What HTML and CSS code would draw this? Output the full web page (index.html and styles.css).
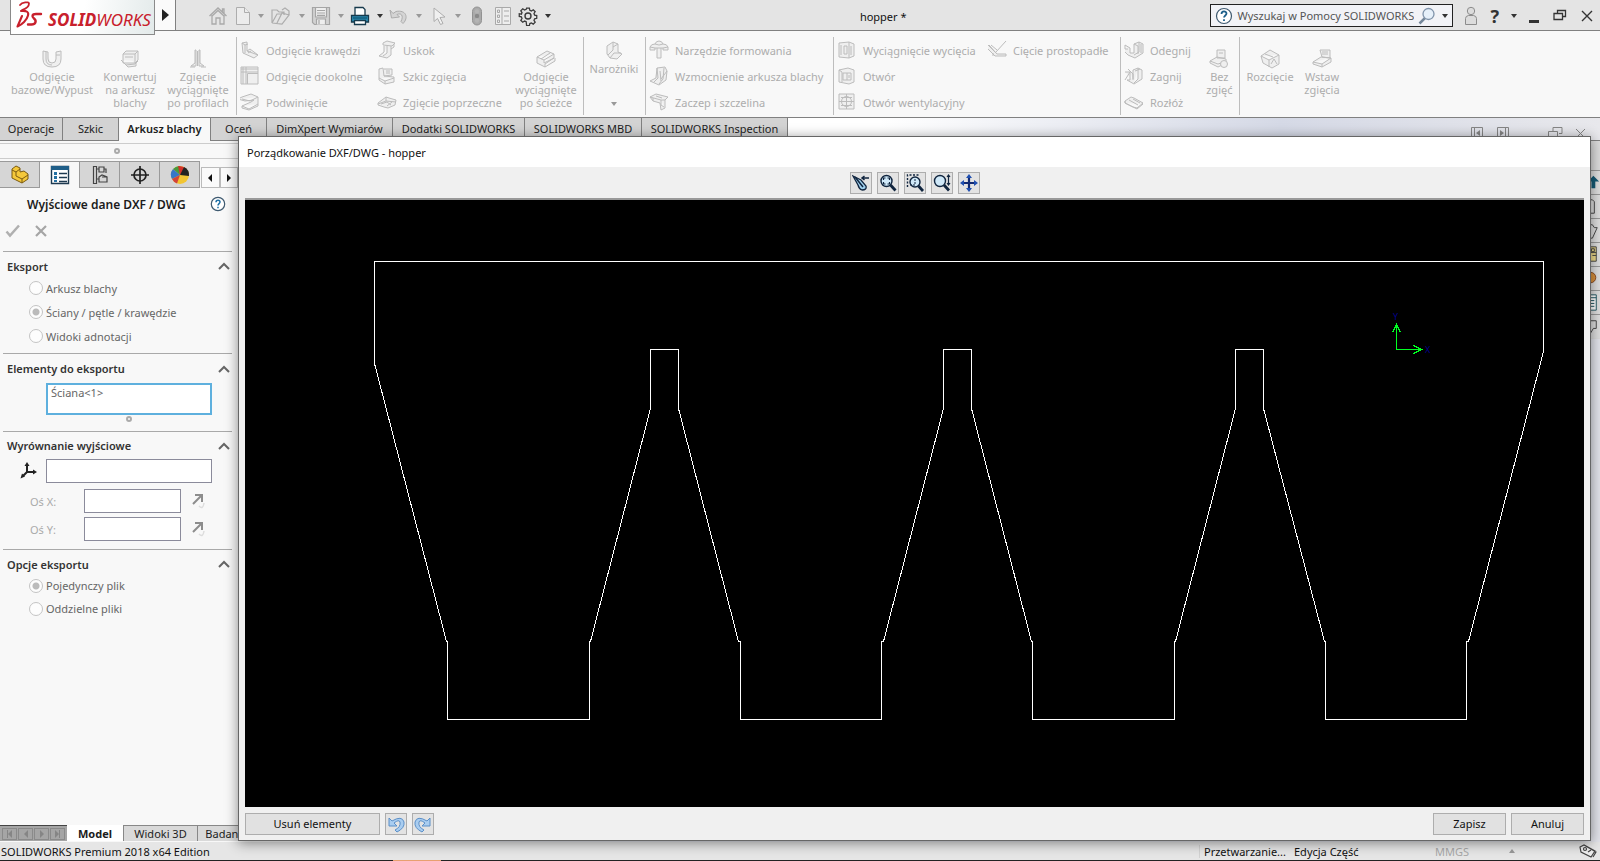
FILE: index.html
```
<!DOCTYPE html>
<html lang="pl">
<head>
<meta charset="utf-8">
<title>SOLIDWORKS – hopper</title>
<link rel="stylesheet" href="styles.css">
</head>
<body>
<div class="app">
  <header class="titlebar">
    <div class="logo">
      <svg class="logo-mark" width="27" height="30" viewBox="0 0 27 30" fill="none" stroke="#c8202c" stroke-linecap="round" stroke-linejoin="round">
        <path d="M4 4c2-3 9-3.500 9-1.500 0 3-4 5.500-7 6.500" stroke-width="1.800"/>
        <path d="M5 10c6-.500 8 1 7 4.500C11 19 6 23.500 1.500 25.500L6 15" stroke-width="2.100"/>
        <path d="M25 13h-5c-4 0-4.500 2.500-2 4.500 3 2.500 1.500 6-2.500 6h-3.500" stroke-width="2.400"/>
      </svg>
      <span class="logo-text"><b>SOLID</b>WORKS</span>
    </div>
    <button class="logo-arrow" aria-label="Menu"><svg width="7" height="12" viewBox="0 0 7 12"><path d="M0 0l7 6-7 6z" fill="#222"/></svg></button>
    <nav class="qat">
      <button class="q-home" aria-label="Start"><svg width="20" height="20" viewBox="0 0 20 20" fill="none" stroke="#a9a9a9" stroke-width="1.300"><path d="M1.500 10L10 2l8.500 8M4 9v9h4v-6h4v6h4V9M14.500 6V3h1.500v4.500M3.500 10.500L10 4.500l6.500 6"/></svg></button>
      <button class="q-new" aria-label="Nowy"><svg width="16" height="20" viewBox="0 0 16 20" fill="#ececec" stroke="#adadad"><path d="M1.500 1.500h8l5 5v12h-13z"/><path d="M9.500 1.500v5h5"/></svg></button>
      <i class="caret off"></i>
      <button class="q-open" aria-label="Otwórz"><svg width="22" height="20" viewBox="0 0 22 20" fill="none" stroke="#adadad" stroke-width="1.200"><path d="M2 17V4h5l2 2h5v3M2 17L7 8h5M2 17l10 1 7-9-7-2-5 10M12 4l3-2 4 3v4"/></svg></button>
      <i class="caret off"></i>
      <button class="q-save" aria-label="Zapisz plik"><svg width="20" height="20" viewBox="0 0 20 20" fill="none" stroke="#a5a5a5" stroke-width="1.200"><path d="M1.500 1.500h17v17H3.500l-2-2z" fill="#d2d2d2"/><path d="M4.500 2v9h11V2M6 4.500h8M6 7h8M6 9.300h8M5.500 18.500V13h9v5.500M8 14v4" fill="#eee"/></svg></button>
      <i class="caret off"></i>
      <button class="q-print" aria-label="Drukuj"><svg width="20" height="20" viewBox="0 0 20 20" stroke="#173a4c" stroke-width="1.300"><path d="M5 10V1.500h8l2 2V10" fill="#fff"/><path d="M1.500 9.500h17v6.500h-17z" fill="#2d8db4"/><path d="M4.500 14.500h11v4h-11z" fill="#fff"/><path d="M3 12h14" stroke="#0f5673"/></svg></button>
      <i class="caret"></i>
      <button class="q-undo" aria-label="Cofnij"><svg width="20" height="20" viewBox="0 0 20 20" fill="#d4d4d4" stroke="#acacac"><path d="M1 4l1.500 8 8-1-2.500-2.500c4-2 7 1 4 7l2 2c6-6 3-14-7-12L4 7.500z"/></svg></button>
      <i class="caret off"></i>
      <button class="q-cursor" aria-label="Wybierz"><svg width="16" height="20" viewBox="0 0 16 20" fill="#f0f0f0" stroke="#adadad"><path d="M2 2l11 9-5 .5 3 6-2.500 1-3-6L2 15.500z"/></svg></button>
      <i class="caret off"></i>
      <button class="q-light" aria-label="Przebuduj"><svg width="12" height="20" viewBox="0 0 12 20"><rect x="1.500" y="1" width="9" height="18" rx="4.500" fill="#aaa" stroke="#929292"/><circle cx="6" cy="5.500" r="2.200" fill="#b4b4b4"/><circle cx="6" cy="10" r="2.200" fill="#8a8a8a"/><circle cx="6" cy="14.500" r="2.200" fill="#b4b4b4"/></svg></button>
      <button class="q-list" aria-label="Właściwości pliku"><svg width="18" height="20" viewBox="0 0 18 20" fill="#eee" stroke="#a9a9a9"><path d="M1.500 1.500h15v17h-15zM8 1.500v17M3.500 4h2v2.500h-2zM3.500 9h2v2.500h-2zM3.500 14h2v2.500h-2zM10 5h5M10 10h5M10 15h5"/></svg></button>
      <button class="q-gear" aria-label="Opcje"><svg width="20" height="20" viewBox="0 0 20 20" fill="none" stroke="#3a3a3a" stroke-width="1.400"><path d="M8.500 1.500h3l.5 2.300 1.700.7 2-1.300 2.100 2.100-1.300 2 .7 1.700 2.300.5v3l-2.300.5-.7 1.700 1.300 2-2.100 2.100-2-1.300-1.700.7-.5 2.300h-3L8 16.200l-1.700-.7-2 1.300-2.100-2.100 1.300-2-.7-1.700-2.300-.5v-3L2.800 8l.7-1.700-1.300-2 2.100-2.100 2 1.300L8 2.800z" transform="translate(.8 .8) scale(.92)"/><circle cx="10" cy="10" r="3"/></svg></button>
      <i class="caret"></i>
    </nav>
    <div class="doc-name">hopper *</div>
    <div class="title-right">
      <div class="search">
        <svg width="18" height="18" viewBox="0 0 18 18"><circle cx="9" cy="9" r="7.500" fill="#fff" stroke="#3f5a70" stroke-width="1.200"/><path d="M6.500 7c0-3.400 5-3.200 5-.4 0 1.800-2.500 1.900-2.500 4M9 12.200v1.800" fill="none" stroke="#1d5f8a" stroke-width="1.800"/></svg>
        <input type="text" aria-label="Szukaj" placeholder="Wyszukaj w Pomocy SOLIDWORKS">
        <svg width="18" height="18" viewBox="0 0 18 18"><path d="M7 11L1.500 16.500" stroke="#75879a" stroke-width="2.500"/><circle cx="10.500" cy="7" r="5.500" fill="#e6f0fa" stroke="#8094ab" stroke-width="1.300"/></svg>
        <i class="caret"></i>
      </div>
      <button class="w-user" aria-label="Użytkownik"><svg width="14" height="20" viewBox="0 0 14 20" fill="#dcdcdc" stroke="#8c8c8c"><path d="M1.500 18.500v-6q0-2.500 3-3h5q3 .5 3 3v6z"/><circle cx="7" cy="5" r="3.700"/></svg></button>
      <button class="w-help" aria-label="Pomoc">?</button>
      <i class="caret"></i>
      <button class="w-min" aria-label="Minimalizuj"><svg width="12" height="16" viewBox="0 0 12 16"><path d="M1 12h10v3H1z" fill="#333"/></svg></button>
      <button class="w-res" aria-label="Przywróć"><svg width="14" height="14" viewBox="0 0 14 14" fill="none" stroke="#333" stroke-width="1.300"><path d="M4.500 4V1.500h8v6H10M1 4.500h8.500v6H1z"/></svg></button>
      <button class="w-close" aria-label="Zamknij"><svg width="12" height="12" viewBox="0 0 12 12" stroke="#333" stroke-width="1.400"><path d="M1 1l10 10M11 1L1 11"/></svg></button>
    </div>
  </header>

  <section class="ribbon">
    <div class="group g1">
      <button class="big"><svg width="20" height="20" viewBox="0 0 20 20"><path d="M1 2v8q0 8 9 8t9-8V2l-5 1v7q0 4-4 4t-4-4V3L1 2M4 3v7q0 6 6 6M14 6h4"/></svg>Odgięcie<br>bazowe/Wypust</button>
      <button class="big"><svg width="20" height="20" viewBox="0 0 20 20"><path d="M3 5l3-3h12v9l-3 3H3zM3 5h12v9M15 5l3-3M1 11l5 5 9-1 3-3M5 8h8M6 16l2 2 8-1v-4"/></svg>Konwertuj<br>na arkusz<br>blachy</button>
      <button class="big"><svg width="20" height="20" viewBox="0 0 20 20"><path d="M7 1v13l-4 3h5V1M12 1v13l4 3h-5V1M9.500 2v15M2 18h5M13 18h5M7 1h1M11 1h1"/></svg>Zgięcie<br>wyciągnięte<br>po profilach</button>
    </div>
    <div class="group g2">
      <div class="stack">
        <button><svg width="20" height="20" viewBox="0 0 20 20"><path d="M2 3l5-1v9l11 4-4 3-11-5zM2 3l3 2v8M5 5l3-1M7 11l3-2 8 6M8 13l3-2"/></svg>Odgięcie krawędzi</button>
        <button><svg width="20" height="20" viewBox="0 0 20 20"><path d="M1 1h17v17H1zM1 6h17M6 1v17M7.500 7.500H18M7.500 7.500V18M3 1v17M1 3h17"/></svg>Odgięcie dookolne</button>
        <button><svg width="20" height="20" viewBox="0 0 20 20"><path d="M2 5l9-3 7 3v7l-9 5-7-3 9-4 3-2-9 1-7-2zM2 7l8 2 8-4M2 14v2l7 2 9-4v-2"/></svg>Podwinięcie</button>
      </div>
      <div class="stack">
        <button><svg width="20" height="20" viewBox="0 0 20 20"><path d="M6 3l4-2 8 2-3 3-9-1zM7 6v6l-5 4 8 2 4-3V6M10 6v7l-4 3M17 4v3l-3 2"/></svg>Uskok</button>
        <button><svg width="20" height="20" viewBox="0 0 20 20"><path d="M2 3l4-1 1 8 10 1v5l-9 2-6-4zM7 3h8v6l-8 1M9 5h4M9 7h4M2 12l6 3 9-3M8 15v3"/></svg>Szkic zgięcia</button>
        <button><svg width="20" height="20" viewBox="0 0 20 20"><path d="M1 11l8-6 3 1 7 2-1 5-7 3-4-1-6-2zM9 5v4l-8 3M9 9l10 1M4 12l6-2 4 3M10 14l5-4"/></svg>Zgięcie poprzeczne</button>
      </div>
      <button class="big"><svg width="20" height="20" viewBox="0 0 20 20"><path d="M1 8l10-6 7 3v4L9 15v3l-8-4zM1 8l7 3 10-6M8 11v3l10-5M9 18l10-6V9M5 10l9-6"/></svg>Odgięcie<br>wyciągnięte<br>po ścieżce</button>
    </div>
    <div class="group g3">
      <button class="big"><svg width="20" height="20" viewBox="0 0 20 20"><path d="M3 5l6-4 5 2v8l4 2-5 5-7-1-3-4zM9 1v8l-5 5M14 3L9 6M6 17l4-5h7"/></svg>Narożniki<i class="caret off"></i></button>
    </div>
    <div class="group g4">
      <div class="stack">
        <button><svg width="20" height="20" viewBox="0 0 20 20"><path d="M1 7q1-3 5-3 1-3 4-3t4 3q4 0 5 3l-5 1H6zM1 7v3h5V8M14 8v2h5V7M8 8v10h4V8M6 4q4 2 8 0"/></svg>Narzędzie formowania</button>
        <button><svg width="20" height="20" viewBox="0 0 20 20"><path d="M8 2l8-1 2 4-1 9-7 5-9-4 6-3zM8 2l1 10-4 4M11 5l1 10M15 2l-1 11-4 5M18 5l-6 8"/></svg>Wzmocnienie arkusza blachy</button>
        <button><svg width="20" height="20" viewBox="0 0 20 20"><path d="M1 5l6-3 12 3-3 3v8l-4 2-1-7-7-2-3-4zM1 5l11 3h4M4 9V6M12 8v5l3 2M7 4l6 2"/></svg>Zaczep i szczelina</button>
      </div>
    </div>
    <div class="group g5">
      <div class="stack">
        <button><svg width="20" height="20" viewBox="0 0 20 20"><path d="M2 3l10-1 5 2v12l-5 2-10-1zM12 2v16M4 5v10M7 6h3v8H7zM14 6v9"/></svg>Wyciągnięcie wycięcia</button>
        <button><svg width="20" height="20" viewBox="0 0 20 20"><path d="M2 4l9-2 6 2v12l-5 2-10-2zM6 7h8v7H6zM2 4l3 2v10M10 7v7M12 9v3"/></svg>Otwór</button>
        <button><svg width="20" height="20" viewBox="0 0 20 20"><path d="M2 2h15v15H2zM9.500 2v15M2 9.500h15M4 5.500h11M4 13.500h11"/><circle cx="9.500" cy="9.500" r="5" fill="none"/></svg>Otwór wentylacyjny</button>
      </div>
      <div class="stack">
        <button><svg width="20" height="20" viewBox="0 0 20 20"><path d="M1 5l8 8M1 9l7 7h11v-2h-9l-8-9M19 1L9 12M4 5l6 5M6 13v3"/></svg>Cięcie prostopadłe</button>
      </div>
    </div>
    <div class="group g6">
      <div class="stack">
        <button><svg width="20" height="20" viewBox="0 0 20 20"><path d="M1 5l5 3v5h4V4l5-2 4 2v9l-8 5-7-3-3-3M15 2v10l-5 3M10 4l4 2v8M1 5v4h3M17 4v9"/></svg>Odegnij</button>
        <button><svg width="20" height="20" viewBox="0 0 20 20"><path d="M1 6h5v8H3l7 4 8-5V4l-4-2-5 2v10M4 3l5 5v5M14 2v11l-4 4M6 6l-5 8M11 5l5-2"/></svg>Zagnij</button>
        <button><svg width="20" height="20" viewBox="0 0 20 20"><path d="M1 9l6-4 3 1 9 5-6 5-4-1-8-4zM1 9v2M5 8l9 5M9 7l7 4M1 11l8 4 4 2 6-5"/></svg>Rozłóż</button>
      </div>
      <button class="big"><svg width="20" height="20" viewBox="0 0 20 20"><path d="M8 1h8v8H8zM1 12l7-4 9 2v4l-8 4-8-4zM1 12l8 3 3-1M10 4h4"/><circle cx="15" cy="15" r="3.500"/></svg>Bez<br>zgięć</button>
    </div>
    <div class="group g7">
      <button class="big"><svg width="20" height="20" viewBox="0 0 20 20"><path d="M1 7l9-6 9 5v9l-7 4-9-5zM1 7l8 4 10-5M9 11v7M11 15l3-5 3 5M5 5l8 3"/></svg>Rozcięcie</button>
      <button class="big"><svg width="20" height="20" viewBox="0 0 20 20"><path d="M8 1h10v8l-8-1zM1 13l8-5 10 1v4l-9 5-9-3zM1 13l9 2 9-6M10 3h6M10 5h6M10 15v3"/></svg>Wstaw<br>zgięcia</button>
    </div>
  </section>

  <nav class="tabs">
    <button class="t1">Operacje</button><button class="t2">Szkic</button><button class="t3 active">Arkusz blachy</button><button class="t4">Oceń</button><button class="t5">DimXpert Wymiarów</button><button class="t6">Dodatki SOLIDWORKS</button><button class="t7">SOLIDWORKS MBD</button><button class="t8">SOLIDWORKS Inspection</button>
    <div class="doc-controls">
      <svg width="120" height="14" viewBox="0 0 120 14" fill="none" stroke="#858585"><path d="M2.500 1.500h11v12h-11zM28.500 1.500h11v12h-11zM5.500 1.500v12M36.500 1.500v12M84 5V1.500h9v6h-3M79.500 5.500h9v6h-9zM107 3l9 9M116 3l-9 9"/><path d="M11 4v6L7 7zM31 4v6l4-3z" fill="#858585" stroke="none"/></svg>
    </div>
  </nav>

  <main class="work">
    <aside class="panel">
      <div class="strip"><span class="dot"></span></div>
      <nav class="fm-tabs">
        <button aria-label="Drzewo operacji"><svg width="20" height="20" viewBox="0 0 20 20" stroke="#7b5a10"><path d="M2 6V4l4-3 4 2v4l4-1 4 3v5l-6 4L2 13z" fill="#f5c83a"/><path d="M2 5l4 2 4-3M6 7v4l6 3 6-4M12 14v4" fill="none"/></svg></button>
        <button class="active" aria-label="Menedżer właściwości"><svg width="20" height="20" viewBox="0 0 20 20"><path d="M1.500 1.500h17v17h-17z" fill="#fff" stroke="#1d3a50" stroke-width="1.400"/><path d="M1 1h18v4H1z" fill="#1f5e88"/><path d="M4 7h3v3H4zM4 11h3v3H4zM4 15h3v2H4z" fill="#2672a3"/><path d="M9 8.500h8M9 12.500h8M9 16.500h8" stroke="#1d3a50" stroke-width="1.300"/></svg></button>
        <button aria-label="Konfiguracje"><svg width="20" height="20" viewBox="0 0 20 20" fill="none" stroke="#444" stroke-width="1.200"><path d="M3.500 18.500v-17h3v17zM6.500 4h3M6.500 14h3M9 2h5v5H9zM9 12l3-2 5 2v5H9zM14 4h2v4M12 12h5"/></svg></button>
        <button aria-label="DimXpert"><svg width="20" height="20" viewBox="0 0 20 20" fill="none" stroke="#222" stroke-width="1.700"><circle cx="10" cy="10" r="6"/><path d="M10 1v18M1 10h18"/></svg></button>
        <button aria-label="Wygląd"><svg width="20" height="20" viewBox="0 0 20 20"><circle cx="10" cy="10" r="9" fill="#f2c532"/><path d="M10 10L3 4a9 9 0 0 1 6-3z" fill="#4a9a3c"/><path d="M10 10L3 4a9 9 0 0 0-1 10z" fill="#3677c8"/><path d="M10 10L8 1a9 9 0 0 1 8 3z" fill="#d3312a"/><path d="M10 10l4-8a9 9 0 0 1 5 9z" fill="#222"/><path d="M10 10l-8 4a9 9 0 0 0 5 4.500z" fill="#d3433a"/></svg></button>
        <div class="fm-scroll"><button aria-label="Wstecz"><i class="left"></i></button><button aria-label="Dalej"><i class="right"></i></button></div>
      </nav>
      <div class="pm-title"><h1>Wyjściowe dane DXF / DWG</h1>
        <button aria-label="Pomoc panelu"><svg width="16" height="16" viewBox="0 0 16 16"><circle cx="8" cy="8" r="6.700" fill="#fff" stroke="#3f5a70" stroke-width="1.200"/><path d="M6 6.300c0-2.700 4-2.500 4-.2 0 1.500-2 1.600-2 3.400M8 10.800v1.500" fill="none" stroke="#1d6fa5" stroke-width="1.500"/></svg></button></div>
      <div class="pm-ok">
        <button aria-label="OK"><svg width="16" height="14" viewBox="0 0 16 14" fill="none" stroke="#b0b0b0" stroke-width="2.500"><path d="M1.500 7.500L5 11.500 14 1.500"/></svg></button>
        <button aria-label="Anuluj panel"><svg width="12" height="12" viewBox="0 0 12 12" stroke="#a5a5a5" stroke-width="2.200"><path d="M1 1l10 10M11 1L1 11"/></svg></button>
      </div>
      <fieldset class="sec s-export">
        <h2>Eksport<svg width="12" height="8" viewBox="0 0 12 8"><path d="M1 7l5-5 5 5"/></svg></h2>
        <label><input type="radio" name="exp" disabled>Arkusz blachy</label>
        <label><input type="radio" name="exp" checked disabled>Ściany / pętle / krawędzie</label>
        <label><input type="radio" name="exp" disabled>Widoki adnotacji</label>
      </fieldset>
      <section class="sec s-items">
        <h2>Elementy do eksportu<svg width="12" height="8" viewBox="0 0 12 8"><path d="M1 7l5-5 5 5"/></svg></h2>
        <textarea rows="1" aria-label="Elementy do eksportu">Ściana&lt;1&gt;</textarea>
        <span class="dot"></span>
      </section>
      <section class="sec s-align">
        <h2>Wyrównanie wyjściowe<svg width="12" height="8" viewBox="0 0 12 8"><path d="M1 7l5-5 5 5"/></svg></h2>
        <div class="row origin"><svg width="18" height="20" viewBox="0 0 18 20" fill="#222" stroke="#222"><path d="M7 11V4M7 11h7M7 11l-4 4" stroke-width="2"/><path d="M7 1l2.500 4h-5zM17 11l-4 2.500v-5zM.5 17.500l1.500-5 3 3z" stroke="none"/></svg><input type="text" aria-label="Początek układu"></div>
        <div class="row axis"><label for="ax">Oś X:</label><input id="ax" type="text"><svg width="16" height="18" viewBox="0 0 16 18"><path d="M2 12l8-8M4 3h7v7" fill="none" stroke="#8d8d8d" stroke-width="2"/><path d="M8 14q4 4 5-3" fill="none" stroke="#ddd" stroke-width="1.500"/></svg></div>
        <div class="row axis"><label for="ay">Oś Y:</label><input id="ay" type="text"><svg width="16" height="18" viewBox="0 0 16 18"><path d="M2 12l8-8M4 3h7v7" fill="none" stroke="#8d8d8d" stroke-width="2"/><path d="M8 14q4 4 5-3" fill="none" stroke="#ddd" stroke-width="1.500"/></svg></div>
      </section>
      <fieldset class="sec s-opts">
        <h2>Opcje eksportu<svg width="12" height="8" viewBox="0 0 12 8"><path d="M1 7l5-5 5 5"/></svg></h2>
        <label><input type="radio" name="opt" checked disabled>Pojedynczy plik</label>
        <label><input type="radio" name="opt" disabled>Oddzielne pliki</label>
      </fieldset>
      <nav class="model-tabs">
        <div class="nav-btns"><button aria-label="Pierwszy"><i class="bar"></i><i class="left"></i></button><button aria-label="Poprzedni"><i class="left"></i></button><button aria-label="Następny"><i class="right"></i></button><button aria-label="Ostatni"><i class="right"></i><i class="bar"></i></button></div>
        <button class="m1 active">Model</button><button class="m2">Widoki 3D</button><button class="m3">Badanie ruchu 1</button>
      </nav>
    </aside>
    <nav class="taskpane">
      <svg width="36" height="24" viewBox="0 0 36 24"><path d="M9 5l-6 6h4v7h4v-7h4z" fill="#155a75"/></svg>
      <svg width="36" height="24" viewBox="0 0 36 24" fill="none" stroke="#444"><path d="M1 5h7l2 2v12H1"/></svg>
      <svg width="36" height="24" viewBox="0 0 36 24" fill="none" stroke="#444"><path d="M4 6h4l2 3h3l-5 11H2"/></svg>
      <svg width="36" height="24" viewBox="0 0 36 24" fill="#f0dc8c" stroke="#444"><path d="M5 4h7v15H5zM5 10h7M7 6h3v3H7zM8 13h4"/></svg>
      <svg width="36" height="24" viewBox="0 0 36 24"><circle cx="6" cy="11" r="5.500" fill="#d8903c" stroke="#8a4a22"/></svg>
      <svg width="36" height="24" viewBox="0 0 36 24" fill="#fff" stroke="#1f5560"><path d="M1 4h11v16H1zM1 7h11M4 10h6M4 13h6M4 16h6"/></svg>
      <svg width="36" height="24" viewBox="0 0 36 24" fill="none" stroke="#444"><path d="M3 6h9v8h-3l-3 5v-5H3"/></svg>
    </nav>
  </main>

  <footer class="status">
    <span class="edition">SOLIDWORKS Premium 2018 x64 Edition</span>
    <span class="st-proc">Przetwarzanie...</span><span class="st-edit">Edycja Część</span><span class="st-units">MMGS</span><i class="up"></i>
    <svg class="tag" width="18" height="14" viewBox="0 0 18 14" fill="#eee" stroke="#444" stroke-width="1.200"><path d="M1 3l4-2 11 6-4 6L2 8zM5 1l12 7-3 5"/><circle cx="6" cy="5" r="1.500"/><path d="M9 8l3-2"/></svg>
  </footer>
  <div class="edge"><span></span></div>

  <div class="dialog" role="dialog" aria-labelledby="dlg-title">
    <div class="dlg-title" id="dlg-title">Porządkowanie DXF/DWG - hopper</div>
    <div class="dlg-tools">
      <button aria-label="Zaznacz"><svg width="18" height="18" viewBox="0 0 18 18"><path d="M1 2l8 4 5 6q1 4-4 4-3-1-4-5z" fill="#9fd0ee" stroke="#10253f" stroke-width="1.300"/><path d="M3 3l8 10M10 4h7M12.500 2L10 4l2.500 2" stroke="#10253f" fill="none" stroke-width="1.500"/></svg></button>
      <button aria-label="Powiększ do okna"><svg width="18" height="18" viewBox="0 0 18 18" fill="none" stroke="#10253f"><circle cx="7.500" cy="7" r="5.500" fill="#cfe8f8" stroke-width="1.400"/><path d="M11.500 11l5 5.500" stroke-width="2.800"/><path d="M4.500 6V4h2M8.500 4h2v2M10.500 8v2h-2M6.500 10h-2V8" stroke-width="1.200"/></svg></button>
      <button aria-label="Powiększ obszar"><svg width="18" height="18" viewBox="0 0 18 18" fill="none" stroke="#10253f"><path d="M1.500 13v-12h12" stroke-dasharray="2 1.500" stroke-width="1.400"/><circle cx="9" cy="8" r="5" fill="#cfe8f8" stroke-width="1.400"/><path d="M9 5v6H4" stroke-dasharray="2 1"/><path d="M12.500 12l4.500 5" stroke-width="2.800"/></svg></button>
      <button aria-label="Powiększ/Pomniejsz"><svg width="18" height="18" viewBox="0 0 18 18" fill="none" stroke="#10253f"><circle cx="7" cy="7" r="5.500" fill="#cfe8f8" stroke-width="1.400"/><path d="M11 11l5 5.500" stroke-width="2.800"/><path d="M15.500 1.500v9M14 3l1.500-2L17 3M14 9l1.500 2L17 9" stroke-width="1.200"/></svg></button>
      <button aria-label="Przesuń"><svg width="18" height="18" viewBox="0 0 18 18" fill="#1f4fb0" stroke="#122a72"><path d="M9 2v14M2 9h14" stroke-width="2.200"/><path d="M9 0L6 4h6zM9 18l-3-4h6zM0 9l4-3v6zM18 9l-4-3v6z" stroke="none"/></svg></button>
    </div>
    <div class="canvas">
      <svg viewBox="245 200 1339 607" fill="none" stroke="#fff" shape-rendering="crispEdges">
        <path d="M374.500 261.500H1543.500V351.500L1468.500 641.500H1466.500V719.500H1325.500V641.500H1324.500L1263.500 408.500V349.500H1235.500V408.500L1175.500 641.500H1174.500V719.500H1032.500V641.500H1031.500L971.500 408.500V349.500H943.500V408.500L883.500 641.500H881.500V719.500H740.500V641.500H738.500L678.500 408.500V349.500H650.500V408.500L590.500 641.500H589.500V719.500H447.500V641.500H446.500L374.500 363.500Z"/>
        <path d="M1396.500 349.500V324.500M1392.500 332.500l4-8 4 8M1396.500 349.500H1421.500M1413.500 345.500l8 4-8 4" stroke="#0f2"/>
        <g class="axis-name"><text x="1393" y="320">Y</text><text x="1425" y="353">X</text></g>
      </svg>
    </div>
    <div class="dlg-foot">
      <button class="b-del">Usuń elementy</button>
      <button class="b-ico" aria-label="Cofnij zmianę"><svg width="18" height="18" viewBox="0 0 18 18" fill="#a9cdf0" stroke="#5b8fc8"><path d="M2 3v8h8L7 8q5-4 6-1 1 5-5 8l2 2q8-4 7-10-2-7-12-1z"/></svg></button>
      <button class="b-ico" aria-label="Ponów zmianę"><svg width="18" height="18" viewBox="0 0 18 18" fill="#a9cdf0" stroke="#5b8fc8"><path d="M16 3v8H8l3-3Q6 4 5 7q-1 5 5 8l-2 2Q0 13 1 7q2-7 12-1z"/></svg></button>
      <span class="grow"></span>
      <button class="b-ok">Zapisz</button>
      <button class="b-ok">Anuluj</button>
    </div>
  </div>
</div>
</body>
</html>
```
FILE: styles.css
```
* { box-sizing: border-box; }
body { margin: 0; font: 11px/13px "Noto Sans", "Open Sans", sans-serif; color: #1c1c1c; }
button { font: inherit; color: inherit; background: none; border: 0; padding: 0; }
input, textarea { font: inherit; color: inherit; }
h1 { margin: 0; font-size: 12px; font-weight: 600; }
h2 { margin: 0; font-size: 11px; font-weight: 600; }
svg { flex: none; display: block; }

.app { position: relative; display: flex; flex-direction: column; min-height: 100vh; background: #f8f8f8; }

.caret { flex: none; border: 3px solid transparent; border-top: 4px solid #333; border-bottom: 0; }
.caret.off { border-top-color: #999; }
.left { border: 4px solid transparent; border-right: 4px solid #111; border-left: 0; }
.right { border: 4px solid transparent; border-left: 4px solid #111; border-right: 0; }
.dot { width: 6px; height: 6px; border: 2px solid #aaa; border-radius: 50%; }

/* Title bar */
.titlebar { display: flex; align-items: stretch; height: 31px; background: #e4e4e4; border-bottom: 1px solid #808080; }
.logo { position: relative; z-index: 1; display: flex; align-items: center; gap: 5px; width: 145px; height: 35px; margin-left: 10px; padding: 0 0 3px 5px; background: linear-gradient(100deg, #fff 50%, #e3eaea); border: 1px solid #8a8a8a; border-top: 0; color: #c8202c; }
.logo-text { font-size: 17px; line-height: 20px; font-style: italic; padding-top: 8px; }
.logo-arrow { display: flex; align-items: center; justify-content: center; width: 21px; background: #fafafa; border-right: 1px solid #808080; }
.qat { display: flex; align-items: center; width: 400px; padding: 2px 0 0 32px; }
.qat button { display: flex; }
.qat .q-new { margin-left: 7px; }
.qat .caret { margin-left: 7px; margin-right: 6px; }
.qat .q-cursor, .qat .q-light { margin-left: 4px; }
.qat .q-list { margin-left: 11px; }
.qat .q-gear { margin-left: 6px; }
.doc-name { flex: 1; display: flex; align-items: center; justify-content: center; padding: 2px 20px 0 0; color: #111; }
.title-right { display: flex; align-items: center; padding: 1px 7px 0 0; }
.search { display: flex; align-items: center; width: 243px; height: 23px; padding: 0 4px; border: 1px solid #222; background: #f2f3f7; }
.search input { flex: 1; min-width: 0; height: 18px; padding: 0 4px; border: 0; background: none; }
.search input::placeholder { color: #555; opacity: 1; }
.search .caret { margin-left: 6px; }
.title-right button { display: flex; }
.w-user { margin-left: 11px; }
.title-right .w-help { margin: 0 12px; font-size: 18px; line-height: 20px; font-weight: 700; color: #333; }
.w-min { margin-left: 11px; }
.w-res { margin-left: 13px; }
.w-close { margin-left: 14px; }

/* Ribbon */
.ribbon { display: flex; height: 87px; padding: 6px 0 2px; background: #f8f8f8; color: #adadad; border-bottom: 1px solid #808080; }
.ribbon svg { fill: #efefef; stroke: #bcbcbc; stroke-width: 1; }
.group { display: flex; border-right: 1px solid #bdbdbd; }
.group:last-child { border-right: 0; }
.big { display: flex; flex-direction: column; align-items: center; width: 80px; padding-top: 12px; white-space: nowrap; }
.big svg { margin-bottom: 1px; }
.stack { display: flex; flex-direction: column; }
.stack button { display: flex; align-items: center; gap: 6px; height: 26px; white-space: nowrap; }
.g1 { width: 237px; padding-left: 12px; }
.g1 .big:nth-child(2) { width: 76px; }
.g1 .big:nth-child(3) { width: 60px; }
.g2 { width: 347px; padding-left: 3px; }
.g2 .stack:first-child { width: 137px; }
.g2 .stack:nth-child(2) { width: 132px; }
.g2 .big { width: 74px; }
.g3 { width: 62px; }
.g3 .big { width: 60px; padding-top: 4px; }
.g3 .caret { margin-top: 27px; }
.g4 { width: 188px; padding-left: 3px; }
.g5 { width: 287px; padding-left: 3px; }
.g5 .stack:first-child { width: 150px; }
.g6 { width: 119px; padding-left: 3px; }
.g6 .stack { width: 77px; }
.g6 .big { width: 40px; }
.g7 .big { width: 52px; }
.g7 { padding-left: 4px; }

/* Command tabs */
.tabs { display: flex; height: 23px; background: linear-gradient(90deg, #fff 55%, #d5d9e6 80%, #e8e8ec); border-bottom: 1px solid #808080; }
.tabs button { flex: none; height: 22px; padding-bottom: 2px; background: #d3d3d3; border-right: 1px solid #808080; white-space: nowrap; }
.tabs .active { height: 23px; background: #f8f8f8; font-weight: 600; }
.t1 { width: 63px; } .t2 { width: 56px; } .t3 { width: 92px; } .t4 { width: 56px; }
.t5 { width: 126px; } .t6 { width: 132px; } .t7 { width: 117px; } .t8 { width: 146px; }
.doc-controls { margin-left: auto; padding: 8px 11px 0 0; }

/* Property panel */
.work { flex: 1; display: flex; justify-content: space-between; background: #e2e3ea; overflow: hidden; }
.panel { display: flex; flex-direction: column; width: 300px; padding-right: 62px; background: #f8f8f8; }
.strip { display: flex; align-items: center; justify-content: center; height: 16px; margin-top: 2px; padding-right: 4px; border: 1px solid #ccc; border-width: 1px 0; }
.fm-tabs { display: flex; height: 27px; margin-top: 2px; }
.fm-tabs > button { display: flex; align-items: center; justify-content: center; width: 40px; background: #d6d6d6; border: 1px solid #9a9a9a; border-left: 0; }
.fm-tabs > .active { background: #f8f8f8; border-bottom: 0; }
.fm-scroll { display: flex; flex: 1; padding: 6px 0 0 1px; }
.fm-scroll button { display: flex; align-items: center; justify-content: center; flex: 1; background: #fafafa; border: 1px solid #bbb; }
.pm-title { display: flex; align-items: center; justify-content: space-between; height: 32px; padding: 0 12px 0 27px; }
.pm-ok { display: flex; align-items: center; gap: 14px; height: 31px; padding: 0 0 10px 5px; }
.sec { margin: 0 6px 0 3px; padding: 0; border: 0; border-top: 1px solid #a9a9a9; min-width: 0; color: #666; }
.sec h2 { display: flex; align-items: center; justify-content: space-between; height: 29px; padding: 0 2px 0 4px; color: #333; }
.sec h2 svg { fill: none; stroke: #666; stroke-width: 2; }
.sec > label { display: flex; align-items: center; height: 24px; padding-left: 26px; gap: 3px; }
.sec input[type="radio"] { appearance: none; width: 14px; height: 14px; margin: 0; border: 1px solid #c4c4c4; border-radius: 50%; background: #fdfdfd; }
.sec input[type="radio"]:checked { background: radial-gradient(circle, #bbb 3px, #fdfdfd 4px); }
.s-export { height: 102px; }
.s-export h2 { height: 24px; padding-top: 4px; }
.s-items { height: 78px; }
.s-items textarea { display: block; width: 166px; height: 32px; margin-left: 43px; padding: 1px 3px; border: 2px solid #5eb0de; background: #fff; resize: none; overflow: hidden; outline: 0; }
.s-items .dot { display: block; margin: 1px 0 0 123px; }
.s-align { height: 118px; }
.s-align h2 { height: 27px; }
.row { display: flex; align-items: center; }
.row input { height: 24px; border: 1px solid #8b8b9b; background: #fff; }
.origin { height: 24px; margin-bottom: 4px; padding-left: 17px; }
.origin input { width: 166px; margin-left: 8px; }
.axis { height: 28px; padding-left: 27px; color: #aaa; }
.axis label { width: 54px; }
.axis input { width: 97px; margin-right: 10px; }
.s-opts h2 { height: 24px; padding-top: 4px; }
.s-opts label { height: 23px; }
.model-tabs { display: flex; height: 16px; margin: auto 0 1px; }
.model-tabs > button { flex: none; background: #d9d9d9; border: 1px solid #888; border-width: 1px 1px 0 0; white-space: nowrap; }
.model-tabs > .active { background: #fff; font-weight: 700; border-top: 0; }
.m1 { width: 57px; } .m2 { width: 74px; } .m3 { width: 100px; }
.nav-btns { display: flex; flex: none; gap: 1px; width: 67px; padding: 2px 2px 1px; background: #a5a5a5; border-top: 1px solid #444; }
.nav-btns button { display: flex; flex: 1; align-items: center; justify-content: center; border: 1px solid #8a8a8a; }
.nav-btns .left { border-right-color: #858585; }
.nav-btns .right { border-left-color: #858585; }
.bar { width: 1px; height: 8px; background: #858585; }

.taskpane { flex: none; width: 36px; height: 198px; padding-top: 29px; margin-right: -26px; background: #dcdcdc; overflow: hidden; }
.taskpane svg { margin-left: -6px; background: #dedede; border-top: 1px solid #999; }

/* Status bar */
.status { display: flex; align-items: center; height: 18px; padding: 0 3px 0 1px; background: #e6e6e6; color: #111; }
.status span { flex: none; }
.status .edition { flex: 1; }
.st-proc { width: 95px; border-left: 1px solid #d2d2d2; padding-left: 4px; }
.st-edit { width: 90px; }
.st-units { width: 74px; margin-left: 51px; color: #a8a8a8; }
.up { border: 3px solid transparent; border-bottom: 4px solid #999; border-top: 0; }
.tag { margin-left: 64px; }
.edge { height: 1px; background: #222; }
.edge span { display: block; width: 48px; height: 1px; margin-left: 393px; background: #e8a070; }

/* Clean-up dialog */
.dialog { position: absolute; left: 238px; right: 9px; top: 136px; bottom: 20px; display: flex; flex-direction: column; padding: 0 6px; background: #f0f0f0; border: 1px solid #666; box-shadow: 0 2px 12px rgba(0, 0, 0, .45); color: #111; }
.dlg-title { height: 30px; margin: 0 -6px; padding: 9px 8px; background: #fff; }
.dlg-tools { display: flex; align-items: center; justify-content: center; gap: 5px; height: 33px; padding: 1px 0 0 1px; border-bottom: 2px solid #999; }
.dlg-tools button, .b-ico { display: flex; align-items: center; justify-content: center; width: 22px; height: 22px; background: #e3e3e3; border: 1px solid #adadad; }
.canvas { flex: 1; min-height: 0; background: #000; }
.canvas svg { width: 100%; height: 100%; }
.axis-name text { fill: #00008c; stroke: none; font-size: 9px; }
.dlg-foot { display: flex; align-items: center; gap: 5px; height: 33px; }
.grow { flex: 1; }
.b-del, .b-ok { height: 22px; background: #e1e1e1; border: 1px solid #adadad; }
.b-del { width: 135px; }
.b-ok { width: 73px; }
```
